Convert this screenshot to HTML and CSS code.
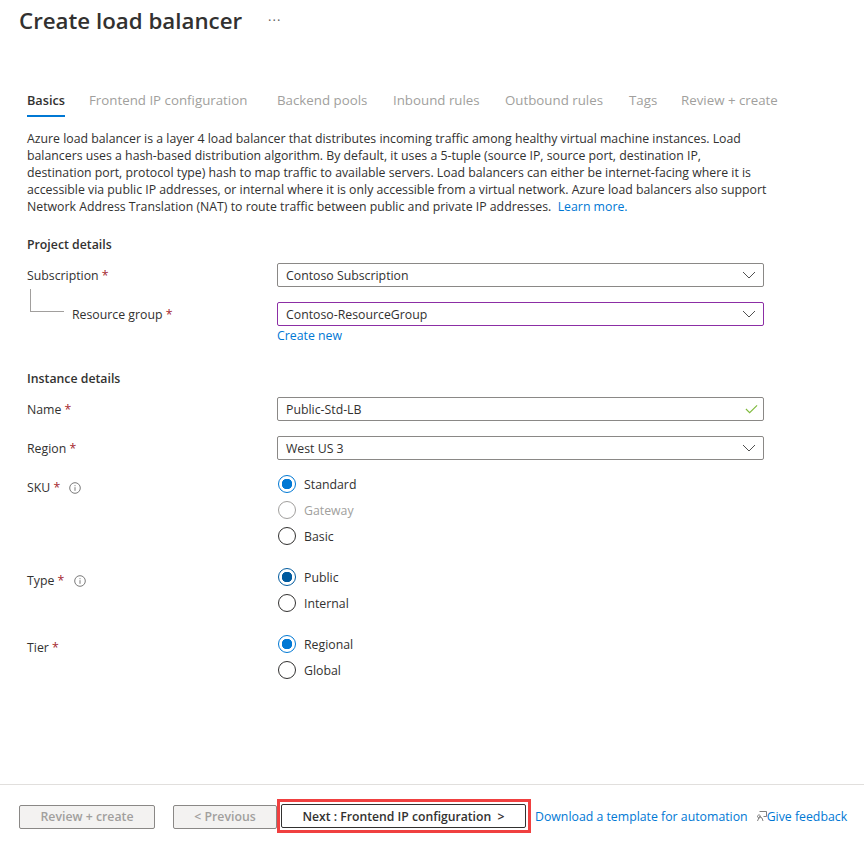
FILE: index.html
```html
<!DOCTYPE html>
<html lang="en">
<head>
    <meta charset="UTF-8">
    <title>Create load balancer</title>
    <link rel="stylesheet" href="styles.css">
</head>
<body>
    <header class="page-header">
        <h1>Create load balancer</h1>
        <span class="more">···</span>
    </header>

    <main class="content">
        <nav class="tabs">
            <a class="tab active">Basics</a>
            <a class="tab t-frontend">Frontend IP configuration</a>
            <a class="tab t-backend">Backend pools</a>
            <a class="tab t-inbound">Inbound rules</a>
            <a class="tab t-outbound">Outbound rules</a>
            <a class="tab t-tags">Tags</a>
            <a class="tab t-review">Review + create</a>
        </nav>

        <p class="intro">Azure load balancer is a layer 4 load balancer that distributes incoming traffic among healthy virtual machine instances. Load<br>
        balancers uses a hash-based distribution algorithm. By default, it uses a 5-tuple (source IP, source port, destination IP,<br>
        destination port, protocol type) hash to map traffic to available servers. Load balancers can either be internet-facing where it is<br>
        accessible via public IP addresses, or internal where it is only accessible from a virtual network. Azure load balancers also support<br>
        Network Address Translation (NAT) to route traffic between public and private IP addresses. &nbsp;<a class="link">Learn more.</a></p>

        <h2 class="section-title">Project details</h2>
        <div class="row">
            <label class="label">Subscription <span class="req">*</span></label>
            <div class="select">Contoso Subscription
                <svg class="chevron" viewBox="0 0 14 8"><path d="M1 1l6 6 6-6" fill="none" stroke="#505050" stroke-width="1"/></svg>
            </div>
        </div>
        <div class="row child-row">
            <label class="label child-label">Resource group <span class="req">*</span></label>
            <div>
                <div class="select focused">Contoso-ResourceGroup
                    <svg class="chevron" viewBox="0 0 14 8"><path d="M1 1l6 6 6-6" fill="none" stroke="#505050" stroke-width="1"/></svg>
                </div>
                <a class="link create-new">Create new</a>
            </div>
        </div>

        <h2 class="section-title instance-title">Instance details</h2>
        <div class="row">
            <label class="label">Name <span class="req">*</span></label>
            <div class="select">Public-Std-LB
                <svg class="check" viewBox="0 0 14 10"><path d="M1 5l4 4 8-8" fill="none" stroke="#7fba3c" stroke-width="1.2"/></svg>
            </div>
        </div>
        <div class="row">
            <label class="label">Region <span class="req">*</span></label>
            <div class="select">West US 3
                <svg class="chevron" viewBox="0 0 14 8"><path d="M1 1l6 6 6-6" fill="none" stroke="#505050" stroke-width="1"/></svg>
            </div>
        </div>

        <div class="row radio-row sku-row">
            <label class="label">SKU <span class="req">*</span>
                <svg class="info" viewBox="0 0 12 12"><circle cx="6" cy="6" r="5.3" fill="none" stroke="#7a7a7a"/><path d="M6 5.2v3.6M6 3.2v1" stroke="#7a7a7a" stroke-width="1"/></svg>
            </label>
            <div class="radios">
                <div class="radio on"><i></i>Standard</div>
                <div class="radio off"><i></i>Gateway</div>
                <div class="radio"><i></i>Basic</div>
            </div>
        </div>
        <div class="row radio-row type-row">
            <label class="label">Type <span class="req">*</span>
                <svg class="info" viewBox="0 0 12 12"><circle cx="6" cy="6" r="5.3" fill="none" stroke="#7a7a7a"/><path d="M6 5.2v3.6M6 3.2v1" stroke="#7a7a7a" stroke-width="1"/></svg>
            </label>
            <div class="radios">
                <div class="radio on dark"><i></i>Public</div>
                <div class="radio"><i></i>Internal</div>
            </div>
        </div>
        <div class="row radio-row tier-row">
            <label class="label">Tier <span class="req">*</span></label>
            <div class="radios">
                <div class="radio on"><i></i>Regional</div>
                <div class="radio"><i></i>Global</div>
            </div>
        </div>
    </main>

    <footer class="footer">
        <button class="btn btn-review">Review + create</button>
        <button class="btn btn-prev">&lt; Previous</button>
        <div class="highlight">
            <button class="btn btn-next">Next : Frontend IP configuration &nbsp;&gt;</button>
        </div>
        <a class="link download">Download a template for automation</a>
        <svg class="feedback-icon" viewBox="0 0 10 11"><path d="M2.5 .5h7v5h-3M.5 10l2-4.5 2.5 1.5L6 10M3.5 5.5a1.5 1.5 0 1 1 0-.1" fill="none" stroke="#707070" stroke-width=".9"/></svg>
        <a class="link feedback">Give feedback</a>
    </footer>
</body>
</html>
```

FILE: styles.css
```css
* {
    box-sizing: border-box;
}

body {
    margin: 0;
    height: 849px;
    overflow: hidden;
    display: flex;
    flex-direction: column;
    font-family: "Open Sans", "Noto Sans", sans-serif;
    font-size: 12.3px;
    color: #323130;
    background-color: #ffffff;
}

.page-header {
    display: flex;
    align-items: center;
    height: 40px;
    padding-left: 19px;
}

h1 {
    margin: 0;
    font-size: 22.3px;
    font-weight: 600;
    color: #323130;
}

.more {
    margin-left: 26px;
    font-size: 13px;
    letter-spacing: 1px;
    color: #605e5c;
}

.content {
    flex: 1;
    padding: 45px 0 0 27px;
}

.tabs {
    display: flex;
    height: 32px;
    line-height: 31px;
    font-size: 13.3px;
    color: #a19f9d;
}

.tab {
    white-space: nowrap;
}

.tab.active {
    width: 38px;
    height: 32px;
    font-size: 12.7px;
    font-weight: 600;
    color: #323130;
    border-bottom: 2px solid #0078d4;
}

.t-frontend { margin-left: 24px; width: 158px; }
.t-backend { margin-left: 30px; width: 89px; }
.t-inbound { margin-left: 27px; width: 85px; }
.t-outbound { margin-left: 27px; width: 97px; }
.t-tags { margin-left: 27px; width: 27px; }
.t-review { margin-left: 25px; }

.intro {
    margin: 13px 0 0;
    line-height: 17px;
    white-space: nowrap;
}

.link {
    color: #0078d4;
}

.section-title {
    margin: 21px 0 0;
    font-size: 12.3px;
    line-height: 17px;
    font-weight: 600;
}

.row {
    display: grid;
    grid-template-columns: 250px 487px;
    margin-top: 10px;
}

.row + .row {
    margin-top: 15px;
}

.label {
    height: 24px;
    line-height: 26px;
}

.req {
    color: #a4262c;
}

.child-row {
    position: relative;
}

/* connector from Subscription down to Resource group */
.child-row::before {
    content: "";
    position: absolute;
    left: 3px;
    top: -13px;
    width: 33px;
    height: 22px;
    border-left: 1px solid #a19f9d;
    border-bottom: 1px solid #a19f9d;
}

.child-label {
    padding-left: 45px;
}

.select {
    position: relative;
    height: 24px;
    padding-left: 8px;
    line-height: 24px;
    border: 1px solid #8a8886;
    border-radius: 2px;
}

.select.focused {
    border-color: #8c2ea5;
}

.chevron {
    position: absolute;
    right: 7px;
    top: 7px;
    width: 14px;
    height: 8px;
}

.check {
    position: absolute;
    right: 5px;
    top: 6px;
    width: 13px;
    height: 10px;
}

.create-new {
    display: block;
    line-height: 20px;
}

.instance-title {
    margin-top: 24px;
}

.info {
    width: 12px;
    height: 12px;
    margin-left: 6px;
    vertical-align: -2px;
}

.radios {
    display: flex;
    flex-direction: column;
    gap: 8px;
    padding-left: 1px;
}

.radio-row .label {
    line-height: 18px;
    padding-top: 4px;
}

.row.sku-row { margin-top: 15px; }
.row.type-row { margin-top: 23px; }
.row.tier-row { margin-top: 23px; }

.radio {
    display: flex;
    align-items: flex-start;
    height: 18px;
    line-height: 20px;
}

.radio i {
    width: 18px;
    height: 18px;
    margin-right: 8px;
    border: 1px solid #323130;
    border-radius: 50%;
}

.radio.on i {
    border-color: #0078d4;
    background: radial-gradient(circle, #0078d4 0 5px, #ffffff 5.5px);
}

.radio.on.dark i {
    border-color: #005a9e;
    background: radial-gradient(circle, #005a9e 0 5px, #ffffff 5.5px);
}

.radio.off {
    color: #a19f9d;
}

.radio.off i {
    border-color: #a19f9d;
}

.footer {
    display: flex;
    align-items: flex-start;
    height: 65px;
    padding: 14px 0 0 19px;
    border-top: 1px solid #e1dfdd;
    white-space: nowrap;
}

.btn {
    height: 24px;
    margin-top: 6px;
    padding: 0;
    font-family: inherit;
    font-size: 12.3px;
    font-weight: 600;
    line-height: 20px;
    border: 1px solid #8a8886;
    border-radius: 2px;
    color: #a19f9d;
    background-color: #f3f2f1;
}

.btn-review { width: 136px; }
.btn-prev { width: 104px; margin-left: 18px; }

.highlight {
    padding: 2px 2px 2px 1px;
    border: 3px solid #f04040;
}

.btn-next {
    display: block;
    width: 245px;
    margin-top: 0;
    padding-top: 1px;
    font-size: 12.2px;
    color: #323130;
    background-color: #ffffff;
    border-color: #323130;
}

.download,
.feedback {
    line-height: 35px;
}

.download {
    margin-left: 4px;
}

.feedback-icon {
    width: 10px;
    height: 11px;
    margin: 12px 0 0 9px;
}
```
